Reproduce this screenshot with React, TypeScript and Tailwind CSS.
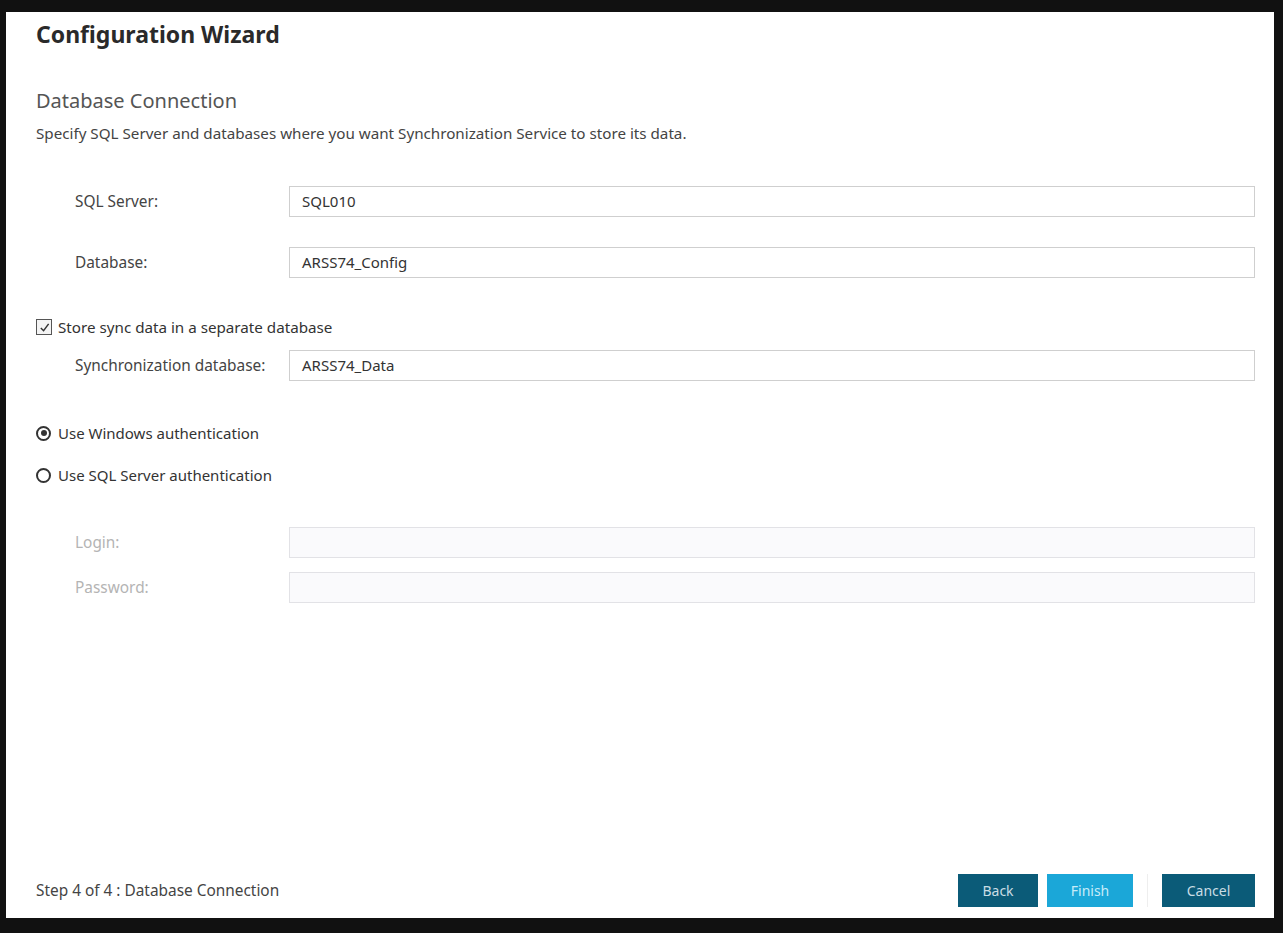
import React from "react";

const font = { fontFamily: '"Noto Sans", "Open Sans", Arial, sans-serif' };

function Field({
  label,
  value,
  disabled,
}: {
  label: string;
  value?: string;
  disabled?: boolean;
}) {
  return (
    <div className="flex items-center pl-[39px]">
      <div
        className={`w-[214px] shrink-0 text-[15.4px] ${disabled ? "text-[#b4b4b4]" : "text-[#444]"}`}
      >
        {label}
      </div>
      <div
        className={`flex h-[31px] flex-1 items-center border px-[12px] text-[15px] ${
          disabled ? "border-[#e2e2e6] bg-[#fafafc]" : "border-[#cfcfcf] bg-white text-[#333]"
        }`}
      >
        {value}
      </div>
    </div>
  );
}

function Radio({ checked, label }: { checked?: boolean; label: string }) {
  return (
    <label className="flex h-[22px] items-center gap-[7px] text-[15px] text-[#333]">
      <span className="flex h-[15px] w-[15px] items-center justify-center rounded-full border-2 border-[#333]">
        {checked && <span className="h-[6px] w-[6px] rounded-full bg-[#333]" />}
      </span>
      {label}
    </label>
  );
}

export default function App() {
  return (
    <div className="h-[933px] w-[1283px] bg-[#111] pl-[6px] pr-[9px] pt-[12px] pb-[15px]" style={font}>
      <div className="flex h-full flex-col bg-white pl-[30px] pr-[19px]">
        <h1 className="pt-[5px] text-[23px] leading-[34px] font-bold text-[#2a2a2a]">Configuration Wizard</h1>

        <h2 className="mt-[36px] text-[20px] leading-[28px] text-[#555]">Database Connection</h2>
        <p className="mt-[8px] text-[15.2px] leading-[20px] text-[#444]">
          Specify SQL Server and databases where you want Synchronization Service to store its data.
        </p>

        <div className="mt-[43px] flex flex-col gap-[30px]">
          <Field label="SQL Server:" value="SQL010" />
          <Field label="Database:" value="ARSS74_Config" />
        </div>

        <label className="mt-[38px] flex h-[22px] items-center gap-[6px] text-[15.2px] text-[#333]">
          <span className="flex h-[16px] w-[16px] items-center justify-center border border-[#555] bg-[#f4f4f4]">
            <svg width="11" height="11" viewBox="0 0 12 12">
              <path d="M2 6.5 L5 9.5 L10.5 2" fill="none" stroke="#333" strokeWidth="1.6" />
            </svg>
          </span>
          Store sync data in a separate database
        </label>
        <div className="mt-[12px]">
          <Field label="Synchronization database:" value="ARSS74_Data" />
        </div>

        <div className="mt-[41px] flex flex-col gap-[20px]">
          <Radio checked label="Use Windows authentication" />
          <Radio label="Use SQL Server authentication" />
        </div>

        <div className="mt-[41px] flex flex-col gap-[14px]">
          <Field label="Login:" disabled />
          <Field label="Password:" disabled />
        </div>

        <div className="mt-auto flex items-center pb-[11px]">
          <div className="flex-1 text-[15.4px] text-[#444]">Step 4 of 4 : Database Connection</div>
          <button className="h-[33px] w-[80px] bg-[#0b5b78] text-[14px] text-[#c9dde5]">Back</button>
          <button className="ml-[9px] h-[33px] w-[86px] bg-[#1ba7d8] text-[14px] text-[#c8ecf8]">Finish</button>
          <div className="mx-[14px] h-[33px] w-px bg-[#eee]" />
          <button className="h-[33px] w-[93px] bg-[#0b5b78] text-[14px] text-[#c9dde5]">Cancel</button>
        </div>
      </div>
    </div>
  );
}
